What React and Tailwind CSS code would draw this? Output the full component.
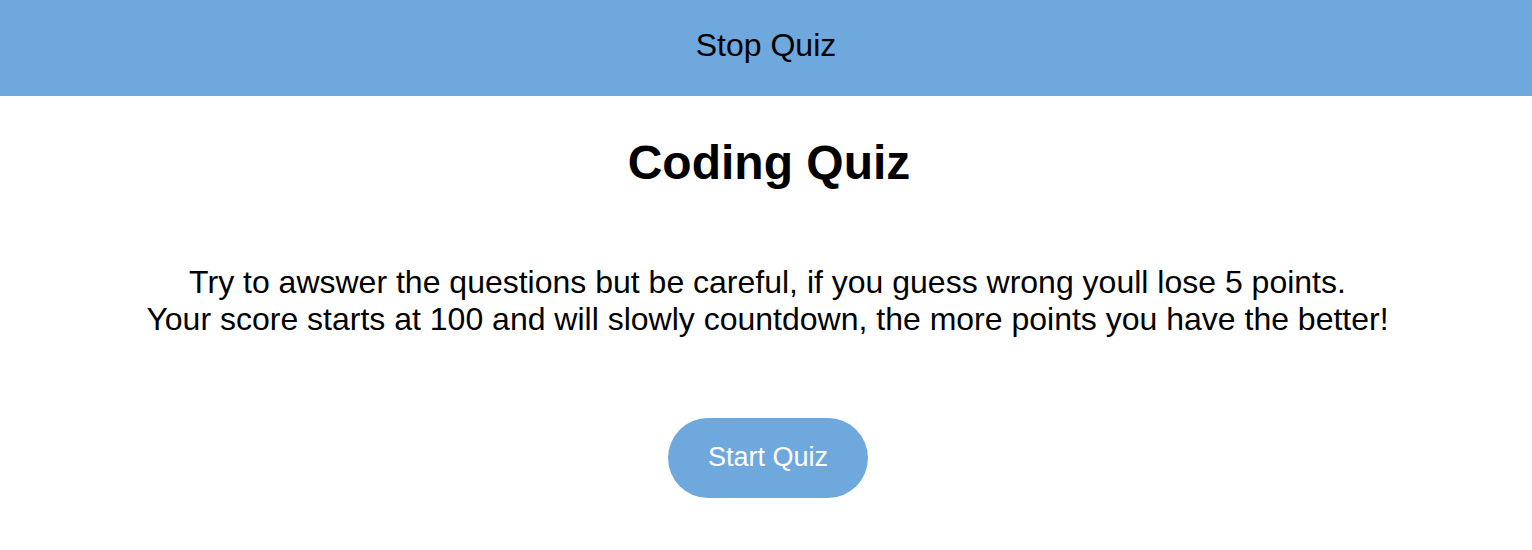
export default function App() {
  return (
    <div className="min-h-[550px] bg-white text-black" style={{ fontFamily: '"Liberation Sans", Arial, sans-serif' }}>
      <header className="h-[96px] bg-[#6fa8dc] flex items-center justify-center pb-[6px]">
        <span className="text-[32px] leading-none">Stop Quiz</span>
      </header>
      <main className="flex flex-col items-center text-center">
        <h1 className="mt-[43px] ml-[6px] text-[48px] font-bold leading-none">Coding Quiz</h1>
        <p className="mt-[77px] ml-[3px] text-[32px] leading-[37px]">
          Try to awswer the questions but be careful, if you guess wrong youll lose 5 points.
          <br />
          Your score starts at 100 and will slowly countdown, the more points you have the better!
        </p>
        <button className="mt-[80px] ml-[4px] w-[200px] h-[80px] rounded-full bg-[#6fa8dc] text-white text-[27px] pb-[2px]">
          Start Quiz
        </button>
      </main>
    </div>
  );
}
